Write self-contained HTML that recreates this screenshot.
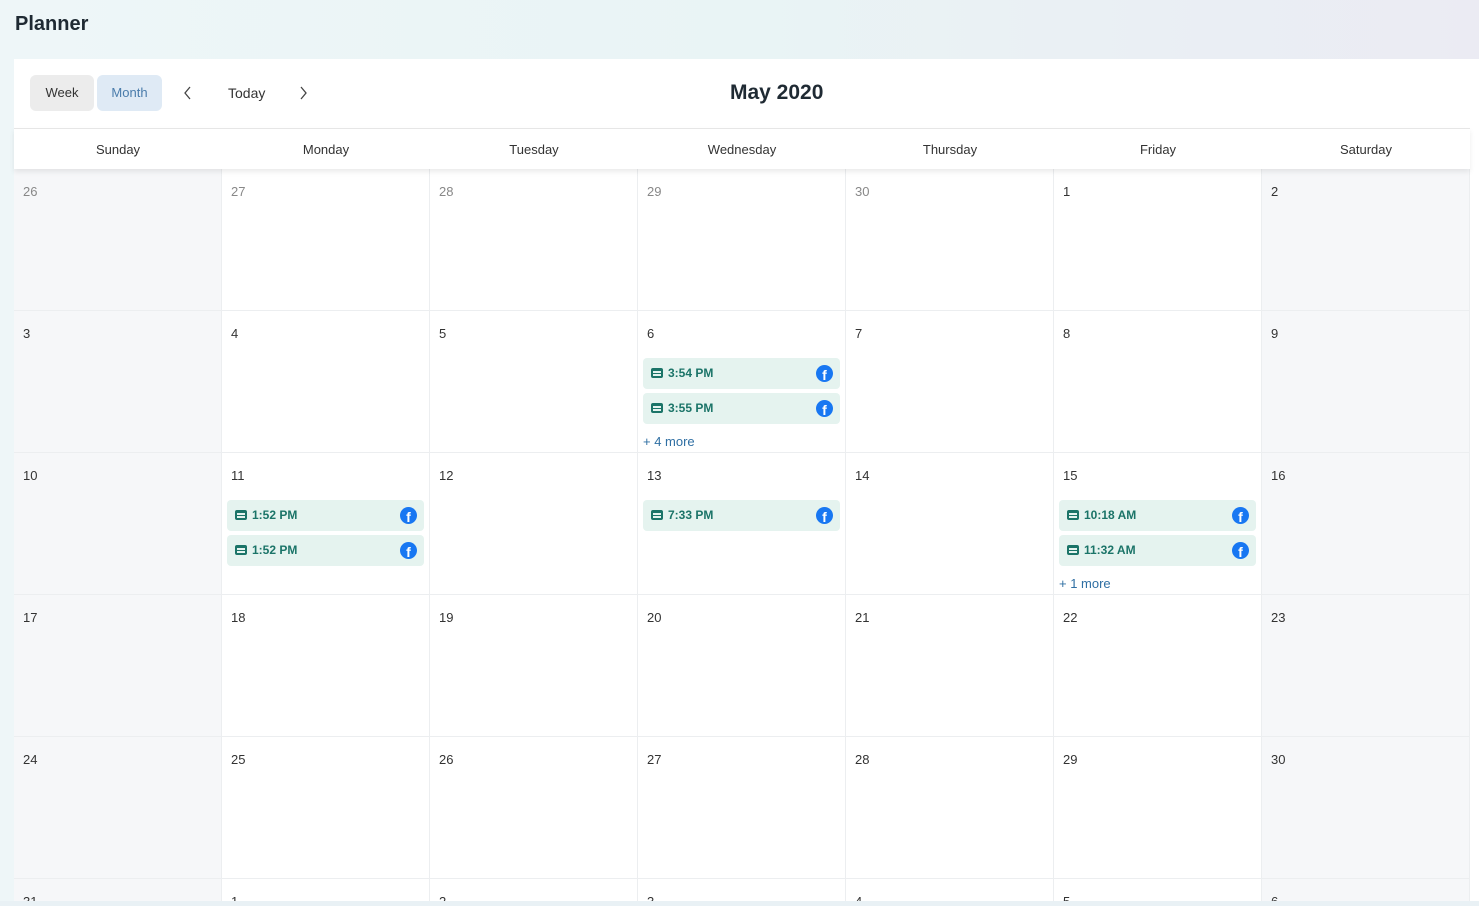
<!DOCTYPE html>
<html><head><meta charset="utf-8"><style>
*{box-sizing:border-box;margin:0;padding:0}
html,body{width:1479px;height:906px;overflow:hidden}
body{font-family:"Liberation Sans",sans-serif;background:linear-gradient(90deg,#eef6f8 0%,#e9f4f5 50%,#ebebf3 100%);position:relative;color:#333}
.title{position:absolute;left:15px;top:13px;font-size:20px;font-weight:bold;color:#1f2a33}
.card{position:absolute;left:14px;top:59px;width:1465px;height:843px;background:#fff}
.btn{position:absolute;top:75px;height:36px;line-height:36px;font-size:13px;text-align:center;border-radius:6px}
.hdr{position:absolute;left:14px;top:128px;width:1456px;height:41px;background:#fff;border-top:1px solid #e6e6e6;box-shadow:0 3px 5px rgba(0,0,0,.08);z-index:2}
.hdr div{position:absolute;top:0;width:208px;text-align:center;line-height:41px;font-size:13px;color:#333}
#grid{position:absolute;left:0;top:0;width:1479px;height:902px;overflow:hidden}
.cell{position:absolute;width:208px;height:142px;border-right:1px solid #eceef0;border-bottom:1px solid #eceef0;background:#fff}
.we{background:#f6f7f9}
.num{position:absolute;left:9px;top:15px;font-size:13px;color:#333}
.g{color:#888}
.ev{position:absolute;left:5px;width:197px;height:31px;background:#e5f3ef;border-radius:4px;font-size:12px;font-weight:bold;color:#1b7468;line-height:31px;padding-left:25px}
.ev:before{content:"";position:absolute;left:8px;top:10px;width:12px;height:10px;border-radius:2px;background:#1b7468}
.ev i{position:absolute;left:10px;width:8px;height:1.5px;background:#e5f3ef}
.fb{position:absolute;right:7px;top:7px;width:17px;height:17px;border-radius:50%;background:#1877f2;color:#fff;font-size:14px;font-weight:bold;line-height:20px;text-align:center;overflow:hidden;font-style:normal}
.more{position:absolute;left:5px;font-size:13px;color:#2f6fa3}
</style></head><body>
<div class="title">Planner</div>
<div class="card"></div>
<div class="btn" style="left:30px;width:64px;background:#ececec;color:#333">Week</div>
<div class="btn" style="left:97px;width:65px;background:#dfeaf5;color:#4a7cab">Month</div>
<svg style="position:absolute;left:182px;top:86px" width="12" height="14"><path d="M8 1 L3 7 L8 13" fill="none" stroke="#444" stroke-width="1.3"/></svg>
<div style="position:absolute;left:228px;top:85px;font-size:14px;color:#333">Today</div>
<svg style="position:absolute;left:297px;top:86px" width="12" height="14"><path d="M4 1 L9 7 L4 13" fill="none" stroke="#444" stroke-width="1.3"/></svg>
<div style="position:absolute;left:730px;top:81px;font-size:21px;font-weight:bold;color:#1f2a33">May 2020</div>
<div id="grid"></div>
<div class="hdr">
<div style="left:0">Sunday</div><div style="left:208px">Monday</div><div style="left:416px">Tuesday</div><div style="left:624px">Wednesday</div><div style="left:832px">Thursday</div><div style="left:1040px">Friday</div><div style="left:1248px">Saturday</div>
</div>
<div style="position:absolute;left:0;top:901px;width:1479px;height:5px;background:#e9f1f5;z-index:3"></div>
<script>
var rows=[[26,27,28,29,30,1,2],[3,4,5,6,7,8,9],[10,11,12,13,14,15,16],[17,18,19,20,21,22,23],[24,25,26,27,28,29,30],[31,1,2,3,4,5,6]];
var ev={"1,3":[["3:54 PM","3:55 PM"],"+ 4 more"],"2,1":[["1:52 PM","1:52 PM"]],"2,3":[["7:33 PM"]],"2,5":[["10:18 AM","11:32 AM"],"+ 1 more"]};
var h="";
for(var r=0;r<6;r++)for(var c=0;c<7;c++){
var x=14+c*208,y=169+r*142;
var grey=(r==0&&c<5);
h+='<div class="cell'+((c==0||c==6)?' we':'')+'" style="left:'+x+'px;top:'+y+'px;'+(r==5?'height:33px;border-bottom:none':'')+'"><div class="num'+(grey?' g':'')+'">'+rows[r][c]+'</div>';
var e=ev[r+","+c];
if(e){e[0].forEach(function(t,i){h+='<div class="ev" style="top:'+(47+i*35)+'px"><i style="top:13px"></i><i style="top:16px"></i>'+t+'<b class="fb">f</b></div>';});
if(e[1])h+='<div class="more" style="top:123px">'+e[1]+'</div>';}
h+='</div>';}
document.getElementById("grid").innerHTML=h;
</script>
</body></html>
